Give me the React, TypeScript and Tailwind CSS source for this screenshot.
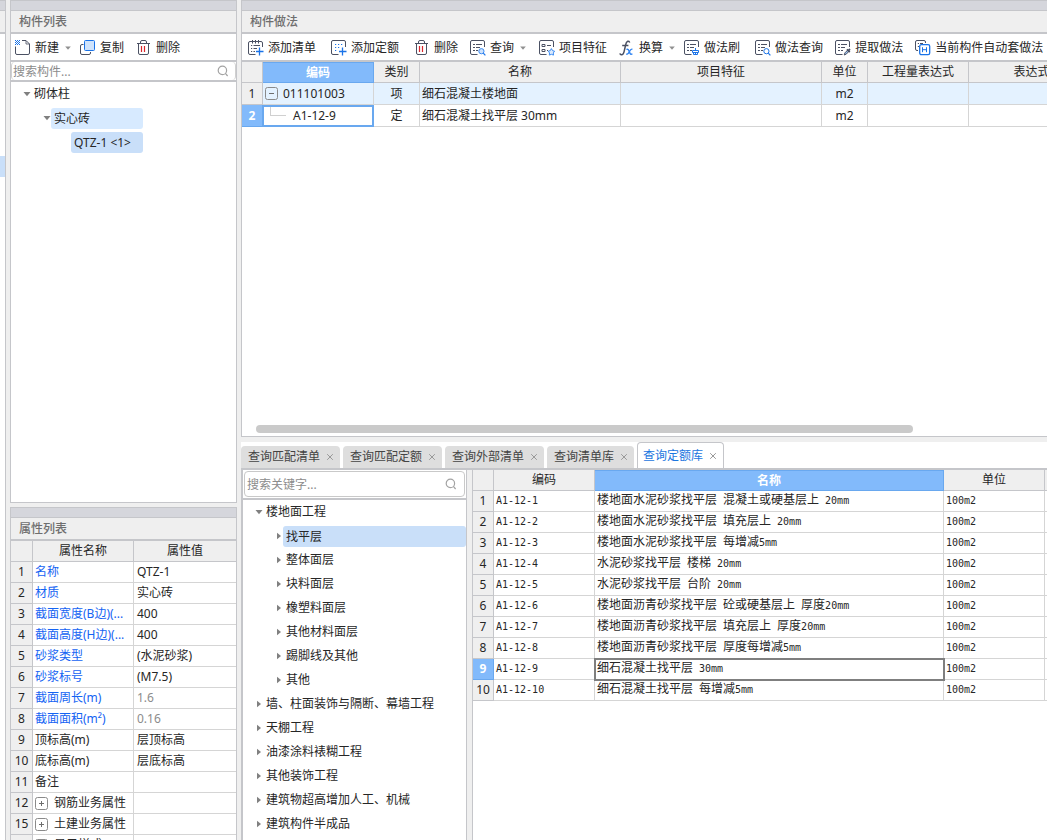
import React, { useState } from 'react';

const ink = '#4b5163';
const blue = '#1a73e8';

function Svg({ children }: { children: React.ReactNode }) {
  return (
    <svg width="16" height="16" viewBox="0 0 16 16" fill="none" stroke={ink} strokeWidth="1" className="shrink-0" aria-hidden="true">
      {children}
    </svg>
  );
}

const sheet = 'M14.5 7V2Q14.5 0.5 13 0.5H2Q0.5 0.5 0.5 2V13Q0.5 14.5 2 14.5H7.5';
const textLines = (
  <>
    <path d="M3 4.5H5M6 4.5H12" />
    <path d="M3 7.5H5M6 7.5H10" />
    <path d="M3 10.5H5M6 10.5H8" />
  </>
);

const icons = {
  create: (
    <Svg>
      <path d="M7 0.5H11L14.5 4V13Q14.5 14.5 13 14.5H2Q0.5 14.5 0.5 13V6.5" />
      <path d="M11 0.8V4H14.5" strokeWidth="0.8" />
      <path d="M0 0.5H5M0 2.5H5M0 4.5H5" stroke={blue} strokeDasharray="1 1" />
      <path d="M1 1.5H5M1 3.5H5" stroke={blue} strokeDasharray="1 1" />
    </Svg>
  ),
  copy: (
    <Svg>
      <path d="M3.5 4.5H2Q0.5 4.5 0.5 6V13Q0.5 14.5 2 14.5H9Q10.5 14.5 10.5 13V12" />
      <rect x="4.5" y="0.5" width="10" height="10" rx="1" fill="#cfe3fc" stroke={blue} />
    </Svg>
  ),
  remove: (
    <Svg>
      <path d="M1 3.5H14M4.5 3.5V2Q4.5 0.5 6 0.5H9Q10.5 0.5 10.5 2V3.5M2.5 3.5V13Q2.5 14.5 4 14.5H11Q12.5 14.5 12.5 13V3.5" />
      <path d="M5.5 6V12M8.5 6V12" stroke="#d9262c" strokeWidth="1.2" />
    </Svg>
  ),
  addList: (
    <Svg>
      <path d="M14.5 7V3Q14.5 1.5 13 1.5H2Q0.5 1.5 0.5 3V13Q0.5 14.5 2 14.5H7.5" />
      <path d="M4.5 0V3.5M7.5 0V3.5M10.5 0V3.5M3 5.5H4.2M5.5 5.5H12M3 8.5H4.2M5.5 8.5H9M3 11.5H4.2M5.5 11.5H7" />
      <path d="M11.5 7.5V15.5M8 11.5H15.5" stroke={blue} strokeWidth="1.3" />
    </Svg>
  ),
  addQuota: (
    <Svg>
      <path d={sheet} />
      <path d="M4 4.5H12M4 7.5H10M4 10.5H7" stroke={blue} strokeWidth="1.2" strokeDasharray="1.2 1.8" />
      <path d="M11.5 7.5V15.5M8 11.5H15.5" stroke={blue} strokeWidth="1.3" />
    </Svg>
  ),
  query: (
    <Svg>
      <path d={sheet} />
      {textLines}
      <circle cx="11.4" cy="11.2" r="2.6" stroke="#3b8bf2" fill="#cfe3fc" />
      <path d="M13.3 13.2L15.4 15.4" stroke={blue} strokeWidth="1.2" />
    </Svg>
  ),
  feature: (
    <Svg>
      <path d={sheet} />
      <path d="M3 4.5H6V6.5H3ZM3 9.5H6V11.5H3ZM8 5.5H12M8 10.5H9" />
      <path d="M12.4 8.6L13.6 10.7L15.6 11.2L14.3 12.9L14.5 15.1L12.4 14.3L10.3 15.1L10.5 12.9L9.2 11.2L11.2 10.7Z" stroke="#3b8bf2" fill="#ddebfd" />
    </Svg>
  ),
  convert: (
    <Svg>
      <path d="M10.6 2.6Q10.2 0.9 8.7 1.3Q7.2 1.8 6.6 5L5.1 11.6Q4.4 14.6 2.6 14.8Q1.2 14.9 0.9 13.4M3.2 5.6H9.4" strokeWidth="1.5" />
      <path d="M7.4 9.5Q9 8.6 9.8 10.6L11 13.2Q11.7 15 13.4 13.8M13.4 9.3Q12 8.6 10.4 11.6Q8.8 14.8 7.2 14" stroke="#2f84f2" strokeWidth="1.4" />
    </Svg>
  ),
  brush: (
    <Svg>
      <path d={sheet} />
      {textLines}
      <path d="M11.5 8V10.5M8.5 10.5H14.5V12.5H8.5ZM9.5 12.5V14.5H13.5V12.5M11.5 12.5V14.5" stroke={blue} />
    </Svg>
  ),
  lookup: (
    <Svg>
      <path d={sheet} />
      {textLines}
      <circle cx="11.4" cy="11.2" r="2.6" stroke={blue} fill="#fff" />
      <path d="M13.3 13.2L15.4 15.4" stroke={blue} strokeWidth="1.2" />
    </Svg>
  ),
  extract: (
    <Svg>
      <path d={sheet} />
      {textLines}
      <path d="M9.2 15L10 12.8L12.4 10.4L13.6 11.6L11.3 14.1Z" fill="#9ec7f8" />
      <path d="M11.9 9.3L14.8 12.2M13.4 10.6L15 9" strokeWidth="1.8" />
    </Svg>
  ),
  auto: (
    <Svg>
      <path d="M10.5 3V2Q10.5 0.5 9 0.5H2Q0.5 0.5 0.5 2V9Q0.5 10.5 2 10.5H3M2.8 3.5H4M5 3.5H8M2.8 6.5H4" />
      <rect x="4.7" y="4.7" width="10" height="10" rx="1.6" stroke={blue} strokeWidth="1.3" fill="#fff" />
      <path d="M7.5 7.2V12.2M11.5 7.2V12.2M7.5 9.7H11.5" stroke={blue} />
    </Svg>
  ),
};

function Search() {
  return (
    <svg width="12" height="12" viewBox="0 0 12 12" fill="none" stroke="#a3a3a3" strokeWidth="1.2" className="shrink-0" aria-hidden="true">
      <circle cx="5.4" cy="5.4" r="4.2" />
      <path d="M8.4 8.4L10.6 11" />
    </svg>
  );
}

function Caret({ open }: { open: boolean }) {
  return (
    <svg width="8" height="8" viewBox="0 0 8 8" fill="#808080" className="shrink-0" aria-hidden="true">
      {open ? <path d="M0.5 2H7.5L4 6.2Z" /> : <path d="M2 0.8L6 4L2 7.2Z" />}
    </svg>
  );
}

type Space = 'tight' | 'normal' | 'wide';
type ToolDef = { icon: React.ReactNode; label: string; menu?: boolean; space?: Space };

const spaceClass: Record<Space, string> = { tight: 'pr-2', normal: 'pr-3', wide: 'pr-[15px]' };

function Toolbar({ items, inset }: { items: ToolDef[]; inset: string }) {
  return (
    <div className={`flex h-7 shrink-0 items-center overflow-hidden border-b-2 border-[#c5c6ca] bg-white pt-0.5 ${inset}`}>
      {items.map((t) => (
        <button key={t.label} type="button" className={`flex shrink-0 items-center gap-1 ${spaceClass[t.space ?? 'normal']}`}>
          {t.icon}
          <span className="whitespace-nowrap">{t.label}</span>
          {t.menu && (
            <svg width="8" height="8" viewBox="0 0 8 8" fill="#909090" className="ml-px" aria-hidden="true">
              <path d="M1.2 2.5H6.8L4 5.8Z" />
            </svg>
          )}
        </button>
      ))}
    </div>
  );
}

function PanelTitle({ children }: { children: React.ReactNode }) {
  return (
    <>
      <div className="h-[9px] shrink-0 bg-[#d5d6dc]" />
      <h2 className="h-6 shrink-0 border-t border-b-2 border-[#c5c6ca] bg-[#efefef] pl-2 font-medium leading-[21px] text-[#6e6e6e]">{children}</h2>
    </>
  );
}

const componentTools: ToolDef[] = [
  { icon: icons.create, label: '新建', menu: true, space: 'tight' },
  { icon: icons.copy, label: '复制' },
  { icon: icons.remove, label: '删除' },
];

const methodTools: ToolDef[] = [
  { icon: icons.addList, label: '添加清单', space: 'wide' },
  { icon: icons.addQuota, label: '添加定额', space: 'wide' },
  { icon: icons.remove, label: '删除' },
  { icon: icons.query, label: '查询', menu: true },
  { icon: icons.feature, label: '项目特征' },
  { icon: icons.convert, label: '换算', menu: true, space: 'tight' },
  { icon: icons.brush, label: '做法刷', space: 'wide' },
  { icon: icons.lookup, label: '做法查询' },
  { icon: icons.extract, label: '提取做法' },
  { icon: icons.auto, label: '当前构件自动套做法' },
];

type Property = { no: number; name: string; value?: string; tone: 'link' | 'plain' | 'group'; muted?: boolean };

const properties: Property[] = [
  { no: 1, name: '名称', value: 'QTZ-1', tone: 'link' },
  { no: 2, name: '材质', value: '实心砖', tone: 'link' },
  { no: 3, name: '截面宽度(B边)(...', value: '400', tone: 'link' },
  { no: 4, name: '截面高度(H边)(...', value: '400', tone: 'link' },
  { no: 5, name: '砂浆类型', value: '(水泥砂浆)', tone: 'link' },
  { no: 6, name: '砂浆标号', value: '(M7.5)', tone: 'link' },
  { no: 7, name: '截面周长(m)', value: '1.6', tone: 'link', muted: true },
  { no: 8, name: '截面面积(m²)', value: '0.16', tone: 'link', muted: true },
  { no: 9, name: '顶标高(m)', value: '层顶标高', tone: 'plain' },
  { no: 10, name: '底标高(m)', value: '层底标高', tone: 'plain' },
  { no: 11, name: '备注', tone: 'plain' },
  { no: 12, name: '钢筋业务属性', tone: 'group' },
  { no: 15, name: '土建业务属性', tone: 'group' },
  { no: 18, name: '显示样式', tone: 'group' },
];

function ToggleBox({ open, label }: { open: boolean; label: string }) {
  return (
    <button type="button" aria-label={label} className="block size-[13px] shrink-0">
      <svg width="13" height="13" viewBox="0 0 13 13" fill="none" stroke="#6e6e6e" aria-hidden="true">
        <rect x="0.5" y="0.5" width="12" height="12" rx="2" stroke="#8a8a8a" />
        <path d={open ? 'M4 6.5H9' : 'M4 6.5H9M6.5 4V9'} />
      </svg>
    </button>
  );
}

function PropertyTable() {
  return (
    <table className="w-full table-fixed border-separate border-spacing-0">
      <colgroup>
        <col className="w-[22px]" />
        <col className="w-[101px]" />
        <col />
      </colgroup>
      <thead>
        <tr className="h-[21px] bg-[#efefef]">
          <th className="border-r border-b border-[#c5c6ca] p-0" aria-label="序号" />
          <th className="border-r border-b border-[#c5c6ca] p-0 font-normal">属性名称</th>
          <th className="border-b border-[#c5c6ca] p-0 font-normal">属性值</th>
        </tr>
      </thead>
      <tbody>
        {properties.map((p) => (
          <tr key={p.no} className="h-[21px]">
            <td className="border-r border-b border-[#c5c6ca] bg-[#efefef] p-0 text-center leading-5">{p.no}</td>
            <td
              className={
                p.tone === 'link'
                  ? 'border-r border-b border-[#d5d5d5] py-0 pr-0 pl-0.5 leading-5 whitespace-nowrap text-[#1463f3]'
                  : 'border-r border-b border-[#d5d5d5] py-0 pr-0 pl-0.5 leading-5 whitespace-nowrap'
              }
            >
              {p.tone === 'group' ? (
                <span className="flex items-center gap-1.5">
                  <ToggleBox open={false} label={`展开${p.name}`} />
                  {p.name}
                </span>
              ) : (
                p.name
              )}
            </td>
            <td className={p.muted ? 'border-b border-[#d5d5d5] py-0 pl-[3px] leading-5 text-[#8c8c8c]' : 'border-b border-[#d5d5d5] py-0 pl-[3px] leading-5'}>{p.value}</td>
          </tr>
        ))}
      </tbody>
    </table>
  );
}

function ComponentTree() {
  return (
    <ul className="min-h-0 flex-1 overflow-hidden bg-white">
      <li>
        <button type="button" className="flex h-6 items-center pl-3">
          <Caret open />
          <span className="pl-[3px]">砌体柱</span>
        </button>
        <ul>
          <li>
            <button type="button" className="flex h-6 w-[132px] items-center pl-8">
              <Caret open />
              <span className="h-[21px] flex-1 rounded-[3px] bg-[#d7eaff] pl-[3px] text-left leading-[21px]">实心砖</span>
            </button>
            <ul>
              <li>
                <button type="button" className="flex h-6 w-[132px] items-center pl-[60px]">
                  <span className="h-[21px] flex-1 whitespace-nowrap rounded-[3px] bg-[#c9dff9] pl-[3px] text-left leading-[21px]">QTZ-1 &lt;1&gt;</span>
                </button>
              </li>
            </ul>
          </li>
        </ul>
      </li>
    </ul>
  );
}

const headCell = 'border-r border-b border-[#c5c6ca] p-0 font-normal';
const headActive = 'border-r border-b border-t border-[#69a8ef] bg-[#82bafb] p-0 font-bold text-white';

function MethodTable() {
  const cell = 'border-r border-b border-[#d5d5d5] p-0 leading-[21px]';
  return (
    <table className="w-[877px] table-fixed border-separate border-spacing-0">
      <colgroup>
        <col className="w-[21px]" />
        <col className="w-[111px]" />
        <col className="w-[46px]" />
        <col className="w-[201px]" />
        <col className="w-[201px]" />
        <col className="w-[46px]" />
        <col className="w-[101px]" />
        <col className="w-[150px]" />
      </colgroup>
      <thead>
        <tr className="h-[21px] bg-[#efefef]">
          <th className={headCell} aria-label="序号" />
          <th className={headActive}>编码</th>
          <th className={headCell}>类别</th>
          <th className={headCell}>名称</th>
          <th className={headCell}>项目特征</th>
          <th className={headCell}>单位</th>
          <th className={headCell}>工程量表达式</th>
          <th className={headCell}>表达式说明</th>
        </tr>
      </thead>
      <tbody>
        <tr className="h-[22px] bg-[#e4f2ff]">
          <td className="border-r border-b border-[#c5c6ca] bg-[#efefef] p-0 text-center">1</td>
          <td className={cell}>
            <span className="flex items-center gap-[5px] pl-0.5">
              <ToggleBox open label="折叠011101003" />
              011101003
            </span>
          </td>
          <td className={`${cell} text-center`}>项</td>
          <td className={`${cell} pl-0.5`}>细石混凝土楼地面</td>
          <td className={cell} />
          <td className={`${cell} text-center`}>m2</td>
          <td className={cell} />
          <td className={cell} />
        </tr>
        <tr className="h-[22px]">
          <td className="border-r border-b border-[#69a8ef] bg-[#82bafb] p-0 text-center font-bold text-white">2</td>
          <td className="border-2 border-l border-[#69a8ef] bg-white p-0 leading-[18px]">
            <span className="flex pl-1.5">
              <span className="h-[9px] w-4 border-b border-l border-[#d0d0d0]" />
              <span className="pl-[7px]">A1-12-9</span>
            </span>
          </td>
          <td className={`${cell} text-center`}>定</td>
          <td className={`${cell} pl-0.5`}>细石混凝土找平层 30mm</td>
          <td className={cell} />
          <td className={`${cell} text-center`}>m2</td>
          <td className={cell} />
          <td className={cell} />
        </tr>
      </tbody>
    </table>
  );
}

const tabs = ['查询匹配清单', '查询匹配定额', '查询外部清单', '查询清单库', '查询定额库'];

function QueryTabs() {
  const [active, setActive] = useState(4);
  return (
    <div className="flex h-[26px] shrink-0 items-end gap-[3px]" role="tablist">
      {tabs.map((label, i) => (
        <div
          key={label}
          className={
            i === active
              ? 'flex h-[26px] items-center gap-1.5 rounded-t border border-b-0 border-[#c5c6ca] bg-white pr-1.5 pl-[5px] text-[#1b76e0]'
              : 'flex h-[22px] items-center gap-1.5 rounded-t bg-[#dedede] pr-1.5 pl-[7px] text-[#444]'
          }
        >
          <button type="button" role="tab" aria-selected={i === active} onClick={() => setActive(i)} className="whitespace-nowrap">
            {label}
          </button>
          <button type="button" aria-label={`关闭${label}`}>
            <svg width="8" height="8" viewBox="0 0 8 8" stroke="#999" fill="none" aria-hidden="true">
              <path d="M1.2 1.2L6.8 6.8M6.8 1.2L1.2 6.8" />
            </svg>
          </button>
        </div>
      ))}
    </div>
  );
}

const floorItems = ['找平层', '整体面层', '块料面层', '橡塑料面层', '其他材料面层', '踢脚线及其他', '其他'];
const chapters = ['墙、柱面装饰与隔断、幕墙工程', '天棚工程', '油漆涂料裱糊工程', '其他装饰工程', '建筑物超高增加人工、机械', '建筑构件半成品'];

function QuotaTree() {
  return (
    <ul className="min-h-0 flex-1 overflow-hidden">
      <li>
        <button type="button" className="flex h-6 items-center pl-3">
          <Caret open />
          <span className="pl-[3px]">楼地面工程</span>
        </button>
        <ul>
          {floorItems.map((name, i) => (
            <li key={name}>
              <button type="button" className="flex h-6 w-full items-center pl-8">
                <Caret open={false} />
                <span className={i === 0 ? 'h-[21px] flex-1 rounded-[3px] bg-[#c9dff9] pl-[3px] text-left leading-[21px]' : 'pl-[3px]'}>{name}</span>
              </button>
            </li>
          ))}
        </ul>
      </li>
      {chapters.map((name) => (
        <li key={name}>
          <button type="button" className="flex h-6 items-center pl-3 whitespace-nowrap">
            <Caret open={false} />
            <span className="pl-[3px]">{name}</span>
          </button>
        </li>
      ))}
    </ul>
  );
}

const quotas = [
  '楼地面水泥砂浆找平层 混凝土或硬基层上 20mm',
  '楼地面水泥砂浆找平层 填充层上 20mm',
  '楼地面水泥砂浆找平层 每增减5mm',
  '水泥砂浆找平层 楼梯 20mm',
  '水泥砂浆找平层 台阶 20mm',
  '楼地面沥青砂浆找平层 砼或硬基层上 厚度20mm',
  '楼地面沥青砂浆找平层 填充层上 厚度20mm',
  '楼地面沥青砂浆找平层 厚度每增减5mm',
  '细石混凝土找平层 30mm',
  '细石混凝土找平层 每增减5mm',
];

/* Latin runs are half as wide as the ideographs beside them. */
function HalfWidth({ text }: { text: string }) {
  return (
    <>
      {text.split(/([ -~]+)/).map((part, i) =>
        i % 2 ? (
          <span key={i} className="font-['DejaVu_Sans_Mono',monospace] text-[10px]">
            {part}
          </span>
        ) : (
          part
        ),
      )}
    </>
  );
}

function QuotaTable() {
  const [selected, setSelected] = useState(8);
  const cell = 'border-r border-b border-[#d5d5d5] py-0 pr-0 pl-0.5 leading-[18px] align-top whitespace-nowrap';
  return (
    <table className="w-full table-fixed border-separate border-spacing-0">
      <colgroup>
        <col className="w-[21px]" />
        <col className="w-[101px]" />
        <col />
        <col className="w-[101px]" />
        <col className="w-0.5" />
      </colgroup>
      <thead>
        <tr className="h-[21px] bg-[#efefef]">
          <th className={headCell} aria-label="序号" />
          <th className={headCell}>编码</th>
          <th className={headActive}>名称</th>
          <th className={headCell}>单位</th>
          <th className="border-b border-[#c5c6ca] p-0" aria-label="更多" />
        </tr>
      </thead>
      <tbody>
        {quotas.map((name, i) => (
          <tr key={name} className="h-[21px]" onClick={() => setSelected(i)}>
            <td
              className={
                i === selected
                  ? 'border-r border-b border-[#69a8ef] bg-[#82bafb] p-0 text-center leading-5 font-bold text-white'
                  : 'border-r border-b border-[#c5c6ca] bg-[#efefef] p-0 text-center leading-5'
              }
            >
              {i + 1}
            </td>
            <td className={cell}>
              <HalfWidth text={`A1-12-${i + 1}`} />
            </td>
            <td className={i === selected ? `${cell} outline-2 -outline-offset-1 outline-[#7f7f7f]` : cell}>
              <HalfWidth text={name} />
            </td>
            <td className={cell}>
              <HalfWidth text="100m2" />
            </td>
            <td className="border-b border-[#d5d5d5] p-0" />
          </tr>
        ))}
      </tbody>
    </table>
  );
}

export default function App() {
  return (
    <div className="flex h-screen w-full overflow-hidden bg-[#efefef] font-['Noto_Sans','Noto_Sans_CJK_SC',sans-serif] text-xs text-[#262626]">
      <div className="flex w-1.5 shrink-0 flex-col border-t border-r border-[#c5c6ca] bg-white">
        <div className="h-[9px] shrink-0 bg-[#d5d6dc]" />
        <div className="h-6 shrink-0 border-t border-b-2 border-[#c5c6ca] bg-[#efefef]" />
        <div className="mt-[122px] h-[21px] bg-[#c9dff9]" />
      </div>

      <aside className="ml-1 flex w-[227px] shrink-0 flex-col gap-1">
        <section className="flex min-h-0 flex-[501] flex-col border border-[#c5c6ca]">
          <PanelTitle>构件列表</PanelTitle>
          <Toolbar items={componentTools} inset="pl-1" />
          <div className="shrink-0 border-b-2 border-[#c5c6ca] bg-white">
            <label className="flex h-[18px] items-center rounded border-x border-[#d0d0d0] pr-1.5 pl-px">
              <input aria-label="搜索构件" placeholder="搜索构件..." className="h-[18px] min-w-0 flex-1 bg-transparent outline-none placeholder:text-[#8c8c8c]" />
              <Search />
            </label>
          </div>
          <ComponentTree />
        </section>
        <section className="flex min-h-0 flex-[332] flex-col overflow-hidden border border-b-0 border-[#c5c6ca] bg-white">
          <PanelTitle>属性列表</PanelTitle>
          <div className="min-h-0 flex-1 overflow-hidden">
            <PropertyTable />
          </div>
        </section>
      </aside>

      <main className="ml-1 flex min-w-0 flex-1 flex-col gap-[5px]">
        <section className="flex min-h-0 flex-[435] flex-col border border-r-0 border-[#c5c6ca] bg-white">
          <PanelTitle>构件做法</PanelTitle>
          <Toolbar items={methodTools} inset="pl-1.5" />
          <div className="min-h-0 flex-1 overflow-hidden">
            <MethodTable />
          </div>
          <div className="shrink-0 pr-[134px] pb-[3px] pl-3.5">
            <div className="h-2 rounded-full bg-[#cacaca]" />
          </div>
        </section>

        <section className="flex min-h-0 flex-[398] flex-col bg-white">
          <QueryTabs />
          <div className="flex min-h-0 flex-1 border-t-2 border-l-2 border-[#c5c6ca]">
            <div className="flex w-56 shrink-0 flex-col border-r border-[#c5c6ca]">
              <div className="shrink-0 border-b-2 border-[#c5c6ca] px-px pt-px pb-px">
                <label className="flex h-[26px] items-center rounded border border-[#c9c9c9] pr-[7px] pl-0.5">
                  <input aria-label="搜索关键字" placeholder="搜索关键字..." className="h-6 min-w-0 flex-1 bg-transparent outline-none placeholder:text-[#8c8c8c]" />
                  <Search />
                </label>
              </div>
              <QuotaTree />
            </div>
            <div className="w-[5px] shrink-0 bg-[#efefef]" />
            <div className="min-w-0 flex-1 overflow-hidden border-l border-[#c5c6ca]">
              <QuotaTable />
            </div>
          </div>
        </section>
      </main>
    </div>
  );
}
